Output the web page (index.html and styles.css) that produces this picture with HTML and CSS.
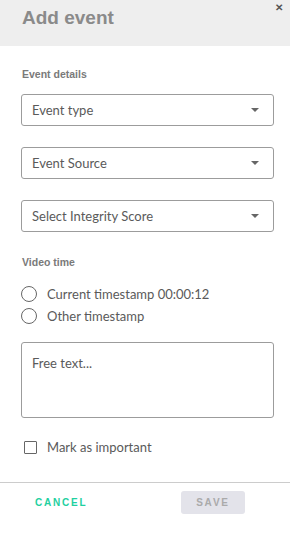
FILE: index.html
```html
<!DOCTYPE html>
<html lang="en">
<head>
    <meta charset="UTF-8">
    <title>Add event</title>
    <link rel="stylesheet" href="styles.css">
</head>
<body>
<div id="dialog">
    <div class="head">
        <h1 class="title">Add event</h1>
        <span class="close">&#x2715;</span>
    </div>
    <div class="body">
        <div class="label">Event details</div>
        <div class="select"><span>Event type</span><i class="caret"></i></div>
        <div class="select"><span>Event Source</span><i class="caret"></i></div>
        <div class="select"><span>Select Integrity Score</span><i class="caret"></i></div>

        <div class="label label-time">Video time</div>
        <ul class="radios">
            <li><span class="radio"></span>Current timestamp 00:00:12</li>
            <li><span class="radio"></span>Other timestamp</li>
        </ul>

        <div class="textarea">Free text...</div>

        <div class="check"><span class="box"></span>Mark as important</div>
    </div>
    <div class="foot">
        <span class="cancel">CANCEL</span>
        <span class="save">SAVE</span>
    </div>
</div>
</body>
</html>
```

FILE: styles.css
```css
* {
    margin: 0;
    padding: 0;
    list-style: none;
    box-sizing: border-box;
}

body {
    width: 290px;
    background: #fff;
    font-family: "Liberation Sans", Arial, sans-serif;
}

#dialog {
    position: relative;
}

.head {
    height: 46px;
    background-color: #eeeeee;
    padding: 7px 22px 0;
}

.title {
    font-size: 19px;
    line-height: 22px;
    font-weight: bold;
    color: #8a8a8a;
}

.close {
    position: absolute;
    top: 2px;
    right: 7px;
    font-size: 10px;
    font-weight: bold;
    color: #555;
}

.body {
    padding: 21px 16px 0 21px;
}

.label {
    font-size: 10.5px;
    line-height: 14px;
    font-weight: bold;
    color: #7a7a7a;
    padding-left: 1px;
    margin-bottom: 13px;
}

.select {
    height: 32px;
    border: 1px solid #9c9c9c;
    border-radius: 3px;
    display: flex;
    align-items: center;
    justify-content: space-between;
    padding: 0 14px 0 10px;
    margin-bottom: 21px;
    font-family: Lato, "Noto Sans", sans-serif;
    font-size: 13px;
    color: #5a5a5a;
}

.caret {
    width: 0;
    height: 0;
    border-left: 4px solid transparent;
    border-right: 4px solid transparent;
    border-top: 4px solid #666;
}

.label-time {
    margin-top: 23px;
    margin-bottom: 14px;
}

.radios li {
    height: 22px;
    display: flex;
    align-items: center;
    font-family: Lato, "Noto Sans", sans-serif;
    font-size: 13px;
    color: #5a5a5a;
}

.radio {
    width: 16px;
    height: 16px;
    border: 1.5px solid #666;
    border-radius: 50%;
    margin-right: 10px;
}

.textarea {
    height: 76px;
    margin-top: 15px;
    border: 1px solid #9c9c9c;
    border-radius: 3px;
    padding: 12px 10px;
    font-family: Lato, "Noto Sans", sans-serif;
    font-size: 13px;
    line-height: 16px;
    color: #5a5a5a;
}

.check {
    height: 20px;
    margin-top: 19px;
    display: flex;
    align-items: center;
    padding-left: 3px;
    font-family: Lato, "Noto Sans", sans-serif;
    font-size: 13px;
    color: #5a5a5a;
}

.box {
    width: 13px;
    height: 13px;
    border: 1.5px solid #666;
    border-radius: 1px;
    margin-right: 10px;
}

.foot {
    margin-top: 25px;
    border-top: 1px solid #cccccc;
    display: flex;
    align-items: center;
    justify-content: space-between;
    padding: 8px 45px 0 35px;
}

.cancel {
    font-size: 10px;
    font-weight: bold;
    letter-spacing: 1.8px;
    color: #1fd0a0;
}

.save {
    width: 64px;
    height: 23px;
    line-height: 23px;
    text-align: center;
    background-color: #e3e3ea;
    border-radius: 3px;
    font-size: 10px;
    font-weight: bold;
    letter-spacing: 1.8px;
    color: #aaaaaa;
}
```
